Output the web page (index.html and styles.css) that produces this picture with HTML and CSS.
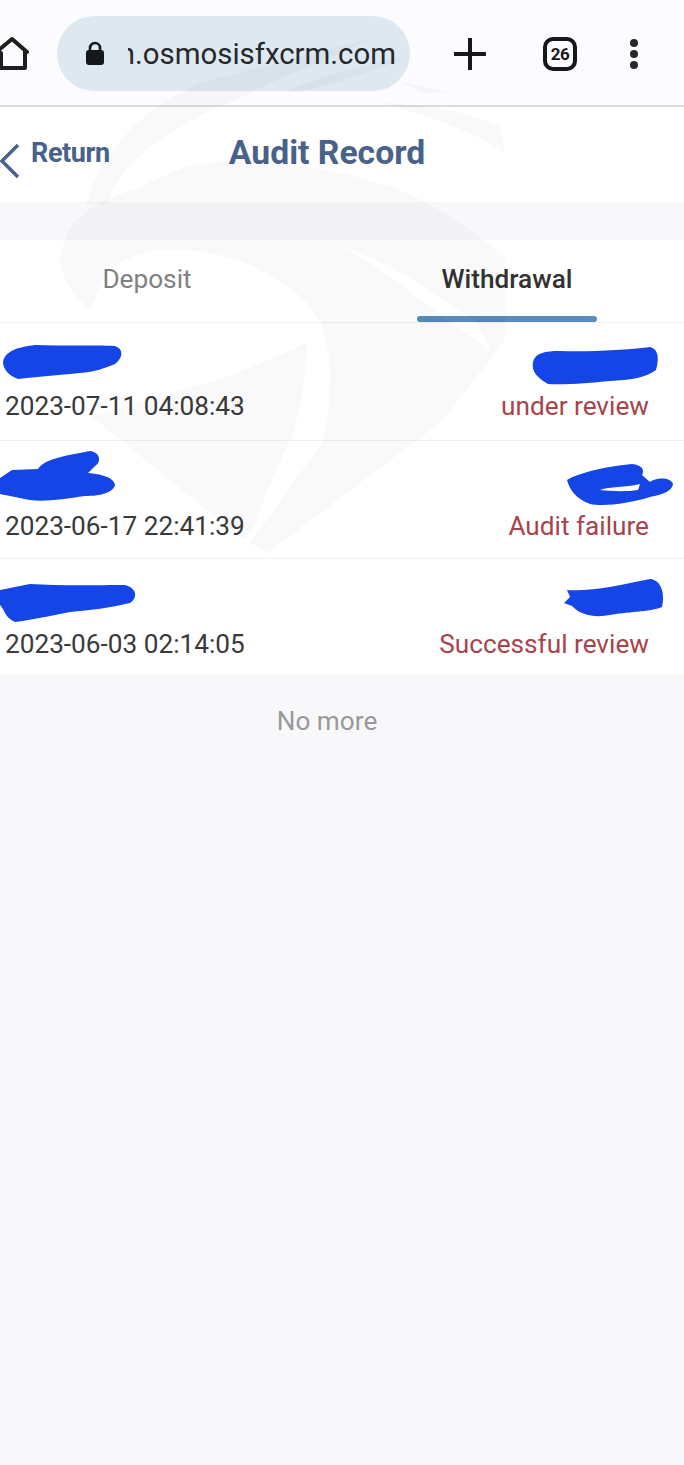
FILE: index.html
```html
<!DOCTYPE html>
<html lang="en">
<head>
<meta charset="utf-8">
<title>Audit Record</title>
<link rel="stylesheet" href="styles.css">
</head>
<body>
<div class="browser-bar">
  <svg class="icon-home" viewBox="0 0 30 34"><path d="M-6,17 L12,2 L27,15 M25,14 V31 H1 V16" /></svg>
  <div class="url-pill">
    <svg class="icon-lock" viewBox="0 0 20 25"><path class="lock-loop" d="M5,10 V7 a5,5 0 0 1 10,0 V10"/><rect class="lock-body" x="1" y="9" width="18" height="15" rx="3"/></svg>
    <div class="url-clip"><span class="url-text">n.osmosisfxcrm.com</span></div>
  </div>
  <svg class="icon-plus" viewBox="0 0 32 32"><path d="M16,1 V31 M1,16 H31"/></svg>
  <div class="tab-count">26</div>
  <div class="dots"><i></i><i></i><i></i></div>
</div>

<header class="page-head">
  <a class="back">
    <svg class="icon-back" viewBox="0 0 20 36"><path d="M18,2 L2,18 L18,34"/></svg>
    <span>Return</span>
  </a>
  <h1>Audit Record</h1>
</header>

<nav class="tabs">
  <div class="tab">Deposit</div>
  <div class="tab active">Withdrawal</div>
</nav>

<section class="list">
  <article class="row">
    <svg class="scribble" viewBox="0 323 684 117"><path d="M3,362 C5,350 20,347 35,345 C60,346 95,345 115,346 C124,349 123,358 115,364 C105,368 95,372 80,373 C60,375 35,377 18,379 C10,376 3,370 3,362Z"/><path d="M533,362 C535,353 545,351 560,351 C590,352 625,350 650,347 C659,349 659,360 656,370 C645,378 630,380 610,381 C590,383 565,385 548,384 C538,378 531,372 533,362Z"/></svg>
    <span class="time">2023-07-11 04:08:43</span>
    <span class="status">under review</span>
  </article>
  <article class="row">
    <svg class="scribble" viewBox="0 441 684 117"><path d="M0,478 L12,470 L38,469 C45,458 70,455 90,451 C100,452 102,462 95,466 L88,473 C100,474 114,477 115,485 C113,493 100,496 85,496 C65,499 45,502 30,500 C15,497 5,495 0,494Z"/><path fill-rule="evenodd" d="M567,480 C580,472 610,466 632,464 C642,465 645,470 642,475 L650,482 C655,478 670,476 673,484 C672,492 660,495 650,497 C630,503 605,507 590,504 C575,498 570,490 567,480Z M600,490 C610,486 625,488 640,484 L638,490 C625,492 610,491 600,490Z"/></svg>
    <span class="time">2023-06-17 22:41:39</span>
    <span class="status">Audit failure</span>
  </article>
  <article class="row">
    <svg class="scribble" viewBox="0 559 684 117"><path d="M0,590 L15,587 L30,584 C60,586 100,585 125,585 C137,588 138,598 130,603 C110,608 90,610 70,612 C50,616 30,620 15,622 C5,618 5,610 0,605Z"/><path d="M567,590 C590,592 620,585 650,579 C662,580 665,595 662,607 C650,612 625,612 610,615 C595,618 580,615 572,606 L564,603 L570,597Z"/></svg>
    <span class="time">2023-06-03 02:14:05</span>
    <span class="status">Successful review</span>
  </article>
</section>

<p class="no-more">No more</p>

<svg class="watermark" viewBox="0 0 684 600">
  <path d="M86,205 C100,150 150,100 210,80 L372,38 C330,60 290,72 240,98 C190,118 125,150 106,205Z"/>
  <path d="M284,92 C320,76 370,62 406,57 C385,68 340,82 300,92Z"/>
  <path d="M396,80 L450,93 L425,93Z"/>
  <path d="M380,102 L440,108 C470,115 490,120 500,127 L505,153 C480,135 440,120 410,112Z"/>
  <path fill-rule="evenodd" d="M60,260 C62,245 66,235 73,223 C90,205 115,195 140,187 C165,175 185,165 207,163 C240,160 275,162 307,167 C340,172 375,180 407,193 C440,208 475,232 505,257 V340 L493,356 L440,423 L413,443 L267,553 L250,543 L322,443 C328,425 330,400 330,377 C330,355 326,338 320,323 L317,317 C305,298 290,287 273,277 C250,263 230,256 207,253 C190,249 172,249 157,250 C135,254 118,262 107,273 C100,285 95,298 90,310 C72,295 62,280 60,260Z M343,247 C385,262 425,285 476,322 L493,355 C480,340 440,315 420,300 C395,280 370,262 343,247Z"/>
  <path d="M308,342 C304,375 304,405 290,440 C278,465 265,495 253,530 L244,540 L92,417 C130,405 165,395 200,385 C235,375 275,358 308,342Z"/>
</svg>
</body>
</html>
```

FILE: styles.css
```css
* { box-sizing: border-box; }
html, body { margin: 0; padding: 0; }
body {
  position: relative;
  width: 684px;
  height: 1465px;
  overflow: hidden;
  background: #f8f8fa;
  font-family: Roboto, "Liberation Sans", sans-serif;
  color: #333;
}

.browser-bar {
  height: 107px;
  display: flex;
  align-items: center;
  background: #fcfcfe;
  border-bottom: 2px solid #dcdcde;
  padding-top: 2px;
}
.icon-home { width: 30px; height: 34px; margin: 0 27px 0 0; flex: none; }
.icon-home path { fill: none; stroke: #1d1d1f; stroke-width: 4; stroke-linejoin: round; stroke-linecap: round; }
.url-pill {
  width: 353px;
  height: 75px;
  border-radius: 38px;
  background: #dde8f1;
  display: flex;
  align-items: center;
  padding-left: 28px;
  flex: none;
}
.icon-lock { width: 20px; height: 25px; flex: none; }
.lock-loop { fill: none; stroke: #16171a; stroke-width: 2.6; }
.lock-body { fill: #16171a; }
.url-clip {
  width: 268px;
  margin-left: 23px;
  overflow: hidden;
  display: flex;
  justify-content: flex-end;
  white-space: nowrap;
}
.url-text { font-size: 29.4px; line-height: 36px; color: #26282b; }
.icon-plus { width: 32px; height: 32px; margin-left: 44px; flex: none; }
.icon-plus path { fill: none; stroke: #16171a; stroke-width: 4; stroke-linecap: round; }
.tab-count {
  width: 34px;
  height: 34px;
  margin-left: 57px;
  border: 4px solid #16171a;
  border-radius: 10px;
  font-size: 17px;
  font-weight: 700;
  line-height: 26px;
  text-align: center;
  letter-spacing: -0.5px;
  color: #16171a;
  flex: none;
}
.dots { display: flex; flex-direction: column; gap: 3px; margin-left: 53px; flex: none; }
.dots i { display: block; width: 8px; height: 8px; border-radius: 50%; background: #26272a; }

.page-head {
  position: relative;
  height: 95px;
  background: #fff;
  display: flex;
  align-items: center;
  margin-bottom: 38px;
}
.back { display: flex; align-items: center; color: #486289; font-size: 27px; font-weight: 700; }
.back span { margin: -3px 0 0 11px; letter-spacing: -0.4px; }
.icon-back { width: 20px; height: 36px; margin-top: 12px; flex: none; }
.icon-back path { fill: none; stroke: #486289; stroke-width: 3.4; }
.page-head h1 {
  position: absolute;
  left: 0;
  width: 654px;
  top: 23px;
  margin: 0;
  text-align: center;
  font-size: 33.7px;
  line-height: 46px;
  font-weight: 700;
  color: #486289;
}

.tabs {
  height: 83px;
  background: #fff;
  border-bottom: 1px solid #f0f0f1;
  display: grid;
  grid-template-columns: 294px 354px;
  column-gap: 36px;
}
.tab {
  position: relative;
  text-align: center;
  font-size: 26.2px;
  line-height: 79px;
  color: #808080;
}
.tab.active { font-weight: 500; color: #333; }
.tab.active::after {
  content: "";
  position: absolute;
  left: 87px;
  bottom: 0;
  width: 180px;
  height: 6px;
  border-radius: 3px;
  background: #5b8bbb;
}

.list { background: #fff; }
.row {
  position: relative;
  height: 118px;
  padding: 0 35px 15px 5px;
  display: flex;
  justify-content: space-between;
  align-items: flex-end;
  border-bottom: 1px solid #f0f0f1;
  font-size: 26.2px;
  line-height: 34px;
}
.row:first-child { padding-bottom: 17px; }
.row:last-child { height: 116px; padding-bottom: 14px; border-bottom: 0; }
.time { color: #3a3a3a; }
.status { color: #a9434a; }
.scribble {
  position: absolute;
  left: 0;
  top: 0;
  width: 684px;
  height: 117px;
  overflow: visible;
}
.scribble path { fill: #1545e6; }

.no-more {
  width: 654px;
  margin: 29px 0 0;
  text-align: center;
  font-size: 26.2px;
  line-height: 34px;
  color: #999;
}

.watermark {
  position: absolute;
  left: 0;
  top: 0;
  width: 684px;
  height: 600px;
  pointer-events: none;
}
.watermark path { fill: rgba(0, 0, 0, 0.022); }
```
